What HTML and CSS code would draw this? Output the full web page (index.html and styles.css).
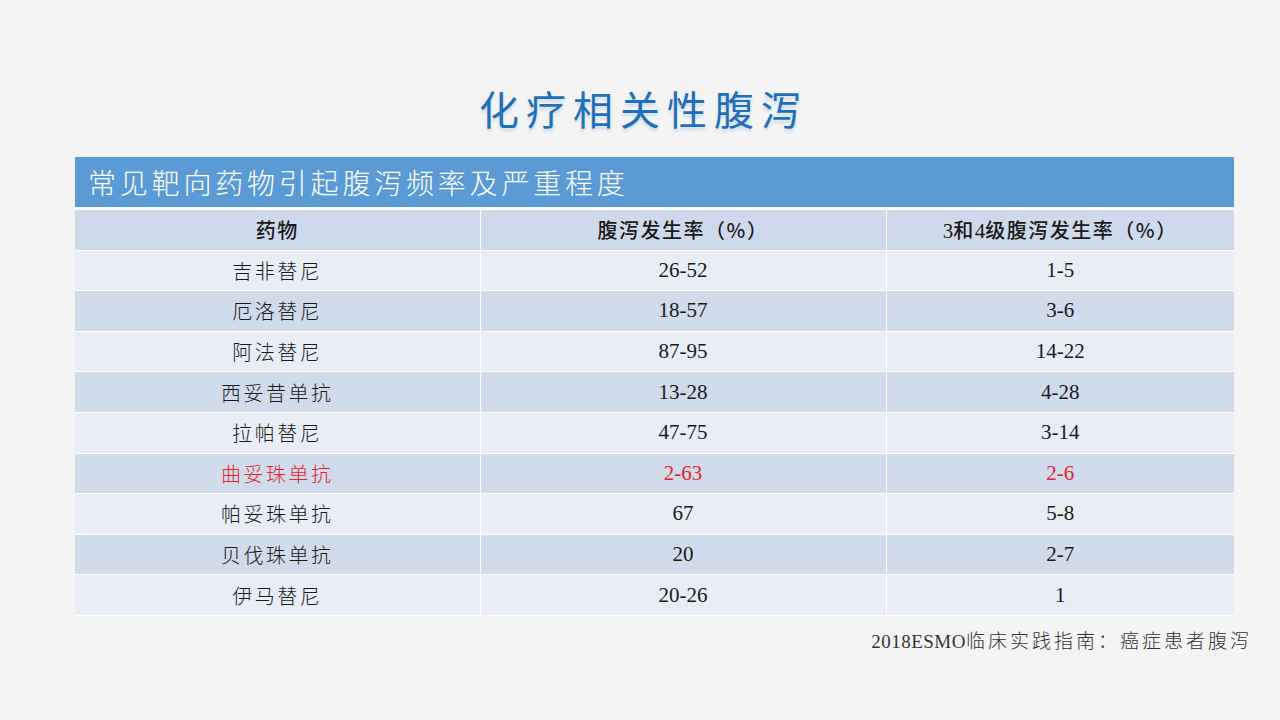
FILE: index.html
```html
<!DOCTYPE html>
<html lang="zh">
<head>
<meta charset="utf-8">
<title>化疗相关性腹泻</title>
<link rel="stylesheet" href="styles.css">
</head>
<body>
<div class="slide">
  <h1 class="title">化疗相关性腹泻</h1>
  <div class="panel">
    <div class="bar">常见靶向药物引起腹泻频率及严重程度</div>
    <table class="grid">
      <colgroup><col class="c1"><col class="c2"><col class="c3"></colgroup>
      <thead>
        <tr><th>药物</th><th>腹泻发生率（%）</th><th><span class="num">3</span>和<span class="num">4</span>级腹泻发生率（%）</th></tr>
      </thead>
      <tbody>
        <tr><td>吉非替尼</td><td class="num">26-52</td><td class="num">1-5</td></tr>
        <tr><td>厄洛替尼</td><td class="num">18-57</td><td class="num">3-6</td></tr>
        <tr><td>阿法替尼</td><td class="num">87-95</td><td class="num">14-22</td></tr>
        <tr><td>西妥昔单抗</td><td class="num">13-28</td><td class="num">4-28</td></tr>
        <tr><td>拉帕替尼</td><td class="num">47-75</td><td class="num">3-14</td></tr>
        <tr class="hl"><td>曲妥珠单抗</td><td class="num">2-63</td><td class="num">2-6</td></tr>
        <tr><td>帕妥珠单抗</td><td class="num">67</td><td class="num">5-8</td></tr>
        <tr><td>贝伐珠单抗</td><td class="num">20</td><td class="num">2-7</td></tr>
        <tr><td>伊马替尼</td><td class="num">20-26</td><td class="num">1</td></tr>
      </tbody>
    </table>
  </div>
  <p class="source"><span class="num">2018ESMO</span>临床实践指南：癌症患者腹泻</p>
</div>
</body>
</html>
```

FILE: styles.css
```css
html, body {
  margin: 0;
  padding: 0;
  background: #f4f4f4;
}
.slide {
  width: 1280px;
  height: 720px;
  overflow: hidden;
  font-family: "Noto Sans CJK SC", sans-serif;
}
.title {
  margin: 80px 0 0 0;
  height: 56px;
  line-height: 56px;
  text-align: center;
  font-size: 40px;
  font-weight: 400;
  letter-spacing: 7px;
  padding-left: 7px;
  color: #1f6fba;
  text-shadow: 0 3px 3px rgba(31, 111, 186, 0.18);
}
.panel {
  margin: 21px 0 0 75px;
  width: 1159px;
}
.bar {
  height: 50px;
  line-height: 50px;
  background: #5b9bd5;
  color: #ffffff;
  font-size: 28px;
  font-weight: 300;
  letter-spacing: 3.8px;
  padding-left: 13px;
  box-sizing: border-box;
}
.grid {
  width: 1159px;
  border-collapse: collapse;
  table-layout: fixed;
  border-top: 3px solid #ffffff;
}
.c1 { width: 405px; }
.c2 { width: 406px; }
.c3 { width: 348px; }
.grid th, .grid td {
  height: 39.6px;
  padding: 0;
  text-align: center;
  vertical-align: middle;
  font-size: 20px;
  color: #1a1a1a;
  letter-spacing: 2.5px;
  border: 1px solid #ffffff;
  border-top: none;
}
.grid tr > :first-child { border-left: none; }
.grid tr > :last-child { border-right: none; }
.grid th {
  font-weight: 500;
  background: #cfd9ec;
  letter-spacing: 1.5px;
}
.grid td { font-weight: 300; }
.grid tbody tr:nth-child(odd) td { background: #e9edf5; }
.grid tbody tr:nth-child(even) td { background: #d0dbec; }
.grid td.num {
  font-family: "Liberation Serif", serif;
  font-size: 21px;
  font-weight: 400;
  letter-spacing: 0;
}
.num {
  font-family: "Liberation Serif", serif;
  letter-spacing: 0;
}
.grid th .num { font-size: 21px; }
.grid tr.hl td { color: #e8232b; }
.source {
  margin: 10px 0 0 0;
  width: 1252px;
  text-align: right;
  font-size: 19px;
  font-weight: 300;
  color: #333333;
  letter-spacing: 3px;
}
.source .num {
  font-size: 19px;
  letter-spacing: 0.5px;
}
```
